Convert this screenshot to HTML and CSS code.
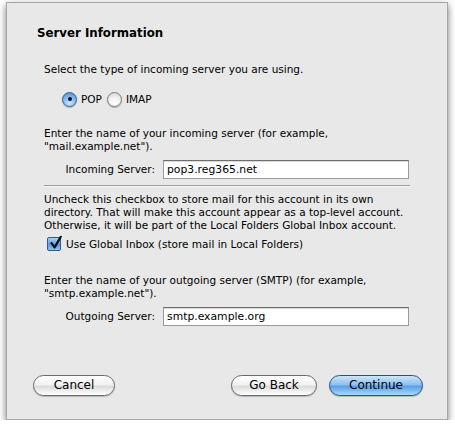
FILE: index.html
```html
<!DOCTYPE html>
<html>
<head>
<meta charset="utf-8">
<link rel="stylesheet" href="styles.css">
</head>
<body>
<div class="window">
  <div class="title">Server Information</div>
  <div class="body">
    <p class="text p-select">Select the type of incoming server you are using.</p>
    <div class="radios">
      <span class="radio on"></span><span class="rlabel">POP</span>
      <span class="radio"></span><span class="rlabel">IMAP</span>
    </div>
    <p class="text p-in">Enter the name of your incoming server (for example,<br>"mail.example.net").</p>
    <div class="field">
      <span class="flabel">Incoming Server:</span>
      <span class="input">pop3.reg365.net</span>
    </div>
    <div class="sep"></div>
    <p class="text p-un">Uncheck this checkbox to store mail for this account in its own<br>directory. That will make this account appear as a top-level account.<br>Otherwise, it will be part of the Local Folders Global Inbox account.</p>
    <div class="check-row">
      <span class="checkbox"><svg width="16" height="16" viewBox="0 0 16 16"><path d="M3.5 8.2 L6.6 12.4 L12.8 1.8" fill="none" stroke="#0a0a0a" stroke-width="2.2" stroke-linecap="round" stroke-linejoin="round"/></svg></span>
      <span class="clabel">Use Global Inbox (store mail in Local Folders)</span>
    </div>
    <p class="text p-out">Enter the name of your outgoing server (SMTP) (for example,<br>"smtp.example.net").</p>
    <div class="field">
      <span class="flabel">Outgoing Server:</span>
      <span class="input">smtp.example.org</span>
    </div>
  </div>
  <div class="buttons">
    <span class="btn cancel">Cancel</span>
    <span class="spacer"></span>
    <span class="btn back">Go Back</span>
    <span class="btn primary">Continue</span>
  </div>
</div>
</body>
</html>
```
FILE: styles.css
```css
html, body {
  margin: 0;
  padding: 0;
  background: #ffffff;
}
body {
  font-family: "DejaVu Sans", "Liberation Sans", sans-serif;
  font-size: 10.5px;
  color: #000;
}
.window {
  margin: 2px 0 0 6px;
  width: 442px;
  height: 418px;
  box-sizing: border-box;
  background: #e8e8e8;
  border: 1px solid #a8a8a8;
  box-shadow: 0 3px 7px rgba(0,0,0,0.55);
  display: flex;
  flex-direction: column;
}
.title {
  font-weight: bold;
  font-size: 11.8px;
  line-height: 16px;
  margin: 22px 0 0 30px;
}
.body {
  margin-left: 37px;
  width: 366px;
}
.text {
  margin: 0;
  line-height: 13px;
}
.p-select { margin-top: 22px; }
.radios {
  display: flex;
  align-items: center;
  margin: 14px 0 0 18px;
  height: 18px;
}
.radio {
  width: 15px;
  height: 15px;
  border-radius: 50%;
  box-sizing: border-box;
  border: 1px solid #7a7a7a;
  background: radial-gradient(circle at 50% 75%, #ffffff 0%, #f4f4f4 40%, #cfcfcf 100%);
  box-shadow: 0 1px 1px rgba(0,0,0,0.25);
  position: relative;
}
.radio.on {
  border-color: #3b5e8f;
  background: radial-gradient(circle at 50% 80%, #c7e6ff 0%, #8fc0f0 45%, #3f86d4 100%);
}
.radio.on::after {
  content: "";
  position: absolute;
  left: 4.5px;
  top: 4.5px;
  width: 4px;
  height: 4px;
  border-radius: 50%;
  background: #111;
}
.rlabel {
  margin: 0 5px 0 4px;
}
.p-in { margin-top: 19px; }
.field {
  display: flex;
  align-items: center;
  margin-top: 6px;
  height: 20px;
}
.flabel {
  width: 119px;
  text-align: right;
  padding-right: 8px;
  box-sizing: border-box;
}
.input {
  width: 246px;
  height: 19px;
  box-sizing: border-box;
  background: #fff;
  border: 1px solid #9a9a9a;
  border-top-color: #6e6e6e;
  box-shadow: inset 0 1px 0 #dadada;
  padding: 0 3px;
  line-height: 17px;
  font-size: 10.8px;
}
.sep {
  margin-top: 6px;
  width: 366px;
  height: 1px;
  background: #9d9d9d;
  border-bottom: 1px solid #f6f6f6;
}
.p-un { margin-top: 6px; }
.check-row {
  display: flex;
  align-items: center;
  margin: 3px 0 0 3px;
  height: 18px;
}
.checkbox {
  width: 14px;
  height: 14px;
  box-sizing: border-box;
  border: 1px solid #36598a;
  border-radius: 2px;
  background: linear-gradient(#a9d2f7, #5b9be0 55%, #8cc4f5);
  position: relative;
  margin-right: 5px;
}
.checkbox svg {
  position: absolute;
  left: 0;
  top: -3px;
}
.p-out { margin-top: 21px; }
.field.out { margin-top: 5px; }
.buttons {
  display: flex;
  align-items: center;
  margin: auto 0 23px 26px;
  width: 390px;
}
.spacer { flex: 1; }
.btn {
  height: 21px;
  box-sizing: border-box;
  border: 1px solid #6a6a6a;
  border-radius: 10.5px;
  background: linear-gradient(#ffffff 0%, #f2f2f2 45%, #dcdcdc 55%, #ffffff 100%);
  box-shadow: 0 1px 1px rgba(0,0,0,0.2);
  font-size: 12px;
  line-height: 19px;
  text-align: center;
}
.cancel { width: 82px; }
.back { width: 86px; margin-right: 12px; }
.primary {
  width: 94px;
  border-color: #2d4f86;
  background: linear-gradient(#cde6fb 0%, #8dc1f0 45%, #5da0e6 55%, #a6d8fb 100%);
}
```
